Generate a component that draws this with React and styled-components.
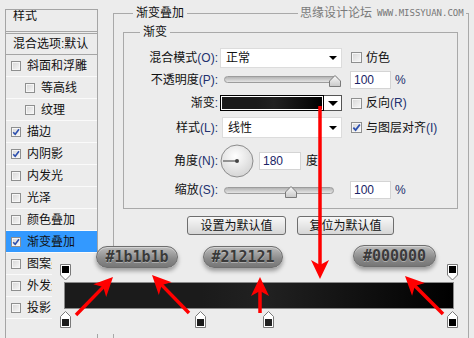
import React from "react";
import styled, { createGlobalStyle } from "styled-components";

const Global = createGlobalStyle`
  html, body { margin: 0; padding: 0; background: #ececec; }
  body {
    font-family: "Liberation Sans", "Noto Sans CJK SC", sans-serif;
    font-size: 12px;
    color: #111;
  }
  * { box-sizing: border-box; }
`;

const Page = styled.div`
  position: relative;
  width: 474px;
  height: 338px;
  overflow: hidden;
  display: flex;
  align-items: flex-start;
  background: #ececec;
`;

/* ---------- sidebar ---------- */
const Sidebar = styled.div`
  margin: 9px 0 0 5px;
  width: 93px;
  height: 329px;
  border: 1px solid #a5a5a5;
  border-bottom: none;
  display: flex;
  flex-direction: column;
  overflow: hidden;
`;

const SideTitle = styled.div`
  height: 24px;
  padding-left: 7px;
  line-height: 13px;
  border-bottom: 3px double #a5a5a5;
`;

const SideBlend = styled.div`
  height: 21px;
  padding-left: 7px;
  line-height: 20px;
  border-bottom: 1px solid #a5a5a5;
  white-space: nowrap;
`;

const SideRow = styled.div`
  height: 22px;
  flex: none;
  display: flex;
  align-items: center;
  gap: 6px;
  padding-left: ${(p) => (p.$indent ? 19 : 5)}px;
  border-bottom: 1px solid #fafafa;
  background: ${(p) => (p.$active ? "#3399ff" : "transparent")};
  white-space: nowrap;
  line-height: 14px;
`;

const Box = styled.span`
  flex: none;
  width: ${(p) => p.$s}px;
  height: ${(p) => p.$s}px;
  border: 1px solid #8e8f8f;
  background: linear-gradient(135deg, #d6d6d6, #f8f8f8);
  box-shadow: inset 0 0 0 1px #f6f6f6;
  display: flex;
  align-items: center;
  justify-content: center;
`;

const Check = ({ size = 10, checked }) => (
  <Box $s={size}>
    {checked && (
      <svg width={size - 2} height={size - 2} viewBox="0 0 8 8">
        <path d="M1.2 4.2 L3.2 6.3 L7 1.3" fill="none" stroke="#2c4fae" strokeWidth="1.6" />
      </svg>
    )}
  </Box>
);

/* ---------- right side ---------- */
const OuterGroup = styled.div`
  position: relative;
  margin: 13px 0 0 15px;
  width: 356px;
  height: 325px;
  border: 1px solid #a9a9a9;
  border-bottom: none;
  padding: 18px 10px 0 9px;
`;

const Legend = styled.span`
  position: absolute;
  top: -8px;
  left: ${(p) => p.$left}px;
  padding: 0 3px;
  background: #ececec;
  line-height: 14px;
`;

const InnerGroup = styled.div`
  position: relative;
  width: 335px;
  border: 1px solid #a9a9a9;
  padding: 14px 0 9px 0;
`;

const FormGrid = styled.div`
  display: grid;
  grid-template-columns: 96px 122px 1fr;
  grid-template-rows: 21px 23px 24px 25px 41px 18px;
  align-items: center;
`;

const Label = styled.div`
  text-align: right;
  padding-right: 2px;
  white-space: nowrap;
  line-height: 14px;
`;

const K = styled.span`
  color: #22306e;
`;

const Cell = styled.div`
  display: flex;
  align-items: center;
  gap: ${(p) => p.$gap || 0}px;
  margin-left: ${(p) => p.$ml || 0}px;
  line-height: 14px;
  white-space: nowrap;
`;

const Select = styled.div`
  height: ${(p) => p.$h}px;
  margin-left: ${(p) => p.$ml || 0}px;
  background: #fff;
  border: 1px solid #dcdcdc;
  display: flex;
  align-items: center;
  justify-content: space-between;
  padding: 0 4px 0 5px;
  line-height: 14px;
`;

const Caret = styled.span`
  width: 0;
  height: 0;
  border-left: ${(p) => p.$s || 4}px solid transparent;
  border-right: ${(p) => p.$s || 4}px solid transparent;
  border-top: ${(p) => p.$s || 4}px solid #000;
`;

const Track = styled.div`
  position: relative;
  margin-left: 4px;
  width: ${(p) => p.$w}px;
  height: 7px;
  border-radius: 4px;
  border: 1px solid #9c9c9c;
  background: linear-gradient(#b4b4b4, #e4e4e4);
`;

const ThumbWrap = styled.div`
  position: absolute;
  top: -2px;
  width: 12px;
  height: 12px;
`;

const Slider = ({ w, pos }) => (
  <Track $w={w}>
    <ThumbWrap style={{ left: pos }}>
      <svg width="12" height="12" viewBox="0 0 12 12">
        <defs>
          <linearGradient id="tg" x1="0" y1="0" x2="0" y2="1">
            <stop offset="0" stopColor="#fafafa" />
            <stop offset="1" stopColor="#c8c8c8" />
          </linearGradient>
        </defs>
        <path d="M6 0.5 L11.5 6 V11.5 H0.5 V6 Z" fill="url(#tg)" stroke="#7a7a7a" />
      </svg>
    </ThumbWrap>
  </Track>
);

const NumInput = styled.div`
  width: ${(p) => p.$w}px;
  height: ${(p) => p.$h}px;
  background: #fff;
  border: 1px solid #d4d4d4;
  padding-left: 3px;
  display: flex;
  align-items: center;
  color: #1a2466;
  line-height: 14px;
`;

const Preview = styled.div`
  width: 104px;
  height: 16px;
  border: 1px solid #000;
  box-shadow: inset 0 0 0 1px #fff;
  background: linear-gradient(to right, #1b1b1b, #1b1b1b 35%, #212121 52%, #000);
`;

const DropBtn = styled.div`
  width: 18px;
  height: 16px;
  background: #fff;
  border: 1px solid #555;
  border-left: none;
  display: flex;
  align-items: center;
  justify-content: center;
`;

const ButtonRow = styled.div`
  display: flex;
  justify-content: center;
  gap: 11px;
  margin-top: 7px;
`;

const Button = styled.div`
  width: ${(p) => p.$w}px;
  height: 19px;
  border: 1px solid #6e6e6e;
  border-radius: 3px;
  background: linear-gradient(#f8f8f8, #d6d6d6);
  display: flex;
  align-items: center;
  justify-content: center;
  line-height: 14px;
`;

const Watermark = styled.div`
  position: absolute;
  left: 298px;
  top: 6px;
  display: flex;
  align-items: center;
  gap: 5px;
  padding: 0 2px;
  background: #ececec;
  color: #7a7a7a;
  line-height: 14px;
`;

const WmUrl = styled.span`
  font-family: "DejaVu Sans Mono", monospace;
  font-size: 9px;
  color: #777;
`;

/* ---------- gradient editor overlay ---------- */
const Editor = styled.div`
  position: absolute;
  left: 52px;
  top: 254px;
  width: 414px;
  height: 80px;
  background: #ececec;
  padding: 28px 0 0 12px;
`;

const Bar = styled.div`
  position: relative;
  width: 390px;
  height: 27px;
  border: 1px solid #8a8a8a;
  background: linear-gradient(to right, #1b1b1b, #1b1b1b 35%, #212121 52%, #000);
`;

const StopWrap = styled.div`
  position: absolute;
  top: ${(p) => (p.$top ? -19 : 28)}px;
  width: 11px;
  height: 17px;
`;

const Stop = ({ x, top, color }) => (
  <StopWrap $top={top} style={{ left: x - 5 }}>
    <svg width="11" height="17" viewBox="0 0 11 17">
      {top ? (
        <>
          <path d="M0.5 0.5 H10.5 V11 L5.5 16 L0.5 11 Z" fill="#fff" stroke="#7a7a7a" />
          <rect x="2" y="2" width="7" height="7" fill={color} />
        </>
      ) : (
        <>
          <path d="M5.5 0.5 L10.5 5.5 V16.5 H0.5 V5.5 Z" fill="#fff" stroke="#7a7a7a" />
          <rect x="2" y="8" width="7" height="7" fill={color} />
        </>
      )}
    </svg>
  </StopWrap>
);

const Pill = styled.div`
  position: absolute;
  left: ${(p) => p.$x}px;
  top: ${(p) => p.$y}px;
  width: ${(p) => p.$w}px;
  height: 22px;
  border-radius: 11px;
  border: 1px solid #6e6e6e;
  background: linear-gradient(#bdbdbd, #8a8a8a 60%, #767676);
  box-shadow: 0 3px 4px rgba(0, 0, 0, 0.35), inset 0 1px 0 rgba(255, 255, 255, 0.35);
  font-family: "DejaVu Sans Mono", monospace;
  font-weight: bold;
  font-size: 15px;
  color: #3a3a3a;
  text-shadow: 0 1px 0 rgba(255, 255, 255, 0.35);
  display: flex;
  align-items: center;
  justify-content: center;
`;

const ArrowLayer = styled.svg`
  position: absolute;
  left: 0;
  top: 0;
  pointer-events: none;
`;

const arrows = [
  { x1: 76, y1: 315, x2: 113, y2: 277 },
  { x1: 189, y1: 313, x2: 152, y2: 275 },
  { x1: 260, y1: 313, x2: 260, y2: 277 },
  { x1: 320, y1: 106, x2: 320, y2: 279 },
  { x1: 443, y1: 314, x2: 405, y2: 276 },
];

const Arrow = ({ x1, y1, x2, y2 }) => {
  const dx = x2 - x1;
  const dy = y2 - y1;
  const len = Math.hypot(dx, dy);
  const ux = dx / len;
  const uy = dy / len;
  const nx = -uy;
  const ny = ux;
  const L = 19;
  const W = 9;
  const bx = x2 - ux * L;
  const by = y2 - uy * L;
  const cx = x2 - ux * 14;
  const cy = y2 - uy * 14;
  const pts = [
    [x2, y2],
    [bx + nx * W, by + ny * W],
    [cx, cy],
    [bx - nx * W, by - ny * W],
  ]
    .map((p) => p.join(","))
    .join(" ");
  return (
    <g>
      <line x1={x1} y1={y1} x2={cx + ux * 2} y2={cy + uy * 2} stroke="#ff0000" strokeWidth="3.5" />
      <polygon points={pts} fill="#ff0000" />
    </g>
  );
};

const sideItems = [
  { t: "斜面和浮雕" },
  { t: "等高线", indent: true },
  { t: "纹理", indent: true },
  { t: "描边", c: true },
  { t: "内阴影", c: true },
  { t: "内发光" },
  { t: "光泽" },
  { t: "颜色叠加" },
  { t: "渐变叠加", c: true, active: true },
  { t: "图案叠加" },
  { t: "外发光" },
  { t: "投影" },
];

const Dial = () => (
  <svg width="34" height="34" viewBox="0 0 34 34">
    <defs>
      <radialGradient id="dg" cx="0.45" cy="0.35" r="0.7">
        <stop offset="0" stopColor="#ffffff" />
        <stop offset="1" stopColor="#d2d2d2" />
      </radialGradient>
    </defs>
    <circle cx="17" cy="17" r="16" fill="url(#dg)" stroke="#8c8c8c" />
    <line x1="17" y1="17" x2="3" y2="17" stroke="#555" strokeWidth="1.2" />
    <circle cx="17" cy="17" r="2" fill="#444" />
  </svg>
);

export default function App() {
  return (
    <>
      <Global />
      <Page>
        <Sidebar>
          <SideTitle>样式</SideTitle>
          <SideBlend>混合选项:默认</SideBlend>
          {sideItems.map((it) => (
            <SideRow key={it.t} $indent={it.indent} $active={it.active}>
              <Check size={10} checked={it.c} />
              <span>{it.t}</span>
            </SideRow>
          ))}
        </Sidebar>

        <OuterGroup>
          <Legend $left={19}>渐变叠加</Legend>
          <InnerGroup>
            <Legend $left={16}>渐变</Legend>
            <FormGrid>
              <Label>
                混合模式<K>(O):</K>
              </Label>
              <Select $h={20}>
                <span>正常</span>
                <Caret />
              </Select>
              <Cell $ml={9} $gap={4}>
                <Check size={11} />
                <span>仿色</span>
              </Cell>

              <Label>
                不透明度<K>(P):</K>
              </Label>
              <Cell>
                <Slider w={114} pos={104} />
              </Cell>
              <Cell $ml={8} $gap={4}>
                <NumInput $w={41} $h={18}>100</NumInput>
                <K>%</K>
              </Cell>

              <Label>
                渐变<K>:</K>
              </Label>
              <Cell>
                <Preview />
                <DropBtn>
                  <Caret $s={5} />
                </DropBtn>
              </Cell>
              <Cell $ml={9} $gap={4}>
                <Check size={11} />
                <span>
                  反向<K>(R)</K>
                </span>
              </Cell>

              <Label>
                样式<K>(L):</K>
              </Label>
              <Select $h={21} $ml={2}>
                <span>线性</span>
                <Caret />
              </Select>
              <Cell $ml={9} $gap={4}>
                <Check size={11} checked />
                <span>
                  与图层对齐<K>(I)</K>
                </span>
              </Cell>

              <Label>
                角度<K>(N):</K>
              </Label>
              <Cell $gap={5}>
                <Dial />
                <NumInput $w={42} $h={18}>180</NumInput>
                <span>度</span>
              </Cell>
              <div />

              <Label>
                缩放<K>(S):</K>
              </Label>
              <Cell>
                <Slider w={110} pos={60} />
              </Cell>
              <Cell $ml={8} $gap={4}>
                <NumInput $w={41} $h={18}>100</NumInput>
                <K>%</K>
              </Cell>
            </FormGrid>
          </InnerGroup>
          <ButtonRow>
            <Button $w={99}>设置为默认值</Button>
            <Button $w={97}>复位为默认值</Button>
          </ButtonRow>
        </OuterGroup>

        <Watermark>
          <span>思缘设计论坛</span>
          <WmUrl>WWW.MISSYUAN.COM</WmUrl>
        </Watermark>

        <Editor>
          <Bar>
            <Stop x={0} top color="#000" />
            <Stop x={387} top color="#000" />
            <Stop x={0} color="#1b1b1b" />
            <Stop x={135} color="#1b1b1b" />
            <Stop x={203} color="#212121" />
            <Stop x={387} color="#000" />
          </Bar>
        </Editor>

        <Pill $x={96} $y={246} $w={82}>#1b1b1b</Pill>
        <Pill $x={203} $y={246} $w={80}>#212121</Pill>
        <Pill $x={353} $y={245} $w={83}>#000000</Pill>

        <ArrowLayer width="474" height="338" viewBox="0 0 474 338">
          {arrows.map((a, i) => (
            <Arrow key={i} {...a} />
          ))}
        </ArrowLayer>
      </Page>
    </>
  );
}
